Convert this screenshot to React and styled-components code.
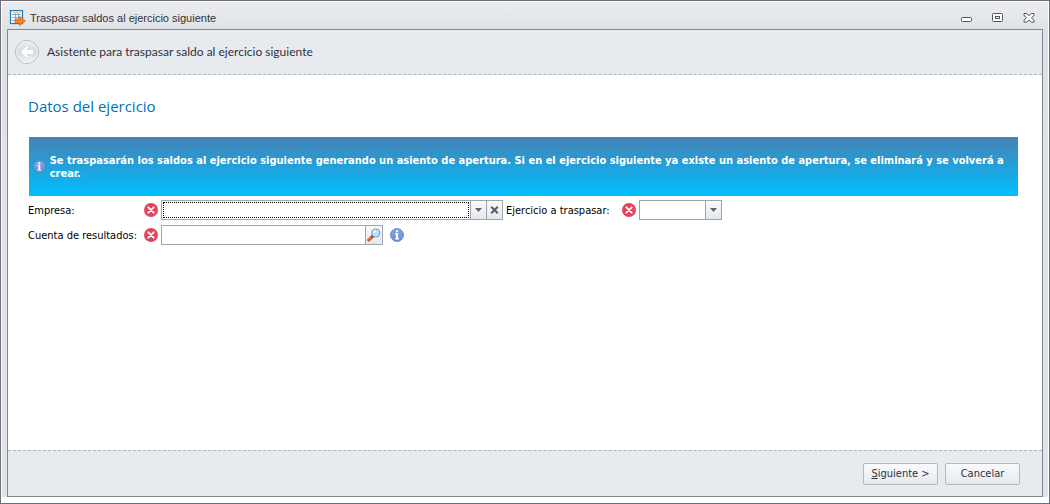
import React, { useState } from 'react';
import styled, { createGlobalStyle } from 'styled-components';

const GlobalStyle = createGlobalStyle`
  * {
    box-sizing: border-box;
  }

  body {
    margin: 0;
    background: #fff;
    color: #000;
    font-family: 'DejaVu Sans Condensed', 'DejaVu Sans', sans-serif;
    font-size: 11px;
    line-height: 13px;
  }

  button, input, select {
    font: inherit;
    color: inherit;
    margin: 0;
  }
`;

const Window = styled.div`
  min-height: 100vh;
  display: flex;
  flex-direction: column;
  border: 1px solid #6c6f78;
  padding: 1px 1px 6px;
  background: #fff;
`;

const Frame = styled.div`
  flex: 1;
  display: flex;
  flex-direction: column;
  padding: 0 5px;
  background: linear-gradient(#ebecef, #dfe2e5 28px, #e1e4e7);
`;

const TitleBar = styled.header`
  display: flex;
  align-items: center;
  height: 27px;
  padding: 5px 8px 0 2px;
`;

const WindowTitle = styled.h1`
  flex: 1;
  margin: 0 0 0 4px;
  font-family: 'Liberation Sans', Arial, sans-serif;
  font-size: 11px;
  font-weight: normal;
  line-height: 16px;
  color: #32323c;
`;

const WindowButtons = styled.div`
  display: flex;
  gap: 20px;
`;

const IconButton = styled.button`
  display: flex;
  padding: 0;
  border: 0;
  background: none;
`;

const Wizard = styled.div`
  flex: 1;
  display: flex;
  flex-direction: column;
  border: 1px solid #84868f;
  background: #fff;
`;

const WizardHeader = styled.div`
  display: flex;
  align-items: center;
  gap: 7px;
  height: 45px;
  padding: 0 6px;
  border-bottom: 1px dashed #b1b5c2;
  background: #e7eaef;
`;

const WizardTitle = styled.h2`
  margin: 0;
  font-family: Lato, sans-serif;
  font-size: 12px;
  font-weight: normal;
  line-height: 16px;
  color: #32323c;
`;

const Page = styled.main`
  flex: 1;
  padding: 20px 24px 20px 20px;
`;

const PageTitle = styled.h3`
  margin: 0 0 20px;
  font-family: 'Open Sans', sans-serif;
  font-size: 15px;
  font-weight: normal;
  line-height: 22px;
  color: #0072b5;
`;

const Banner = styled.div`
  display: flex;
  align-items: center;
  gap: 4px;
  height: 59px;
  margin: 0 0 4px 1px;
  padding: 0 4px;
  background: linear-gradient(#4682b4, #00bfff);
  color: #fff;
  font-weight: bold;

  p {
    margin: 0;
  }
`;

const Row = styled.div`
  display: flex;
  align-items: center;
  gap: 3px;
  height: 20px;
  margin-bottom: 5px;
`;

const Label = styled.label`
  width: 113px;
  white-space: nowrap;
`;

const Field = styled.div`
  display: flex;
  width: ${(props) => props.$width}px;
  height: 20px;
  border: 1px solid #a0a4b1;
  background: #fff;
`;

const Select = styled.select`
  flex: 1;
  min-width: 0;
  appearance: none;
  border: 0;
  border-radius: 0;
  padding: 0 2px;
  background: #fff;
  outline: ${(props) => (props.$active ? '1px dotted #000' : 'none')};
  outline-offset: -2px;
`;

const Input = styled.input`
  flex: 1;
  min-width: 0;
  border: 0;
  padding: 0 2px;
  outline: none;
`;

const FieldButton = styled.button`
  display: flex;
  align-items: center;
  justify-content: center;
  width: ${(props) => props.$width || 16}px;
  padding: 0;
  border: 0;
  border-left: 1px solid #a0a4b1;
  background: linear-gradient(#f8f9fb, #e4e8ed);
`;

const HelpButton = styled(IconButton)`
  margin-left: 4px;
`;

const Footer = styled.footer`
  display: flex;
  justify-content: flex-end;
  align-items: center;
  gap: 7px;
  height: 46px;
  padding: 0 22px 0 0;
  border-top: 1px dashed #b1b5c2;
  background: #e7eaef;
`;

const Button = styled.button`
  width: 75px;
  height: 22px;
  padding: 0;
  border: 1px solid #b5b8c0;
  border-radius: 2px;
  background: linear-gradient(#f9fafc, #e5e9ee);
  color: #32323c;
`;

function AppIcon() {
  return (
    <svg width="17" height="17" viewBox="0 0 17 17" aria-hidden="true">
      <rect x="1.5" y=".5" width="12" height="13" fill="#fff" stroke="#1b7db3" strokeWidth="1.3" />
      <path d="M4 2h2v1H4zM7 2h2v1H7zM10 2h2v1h-2z" fill="#f5b04c" />
      <path d="M3 4.5h9M3 7.500h9M3 10.500h5M6.500 3v9M9.500 3v6" stroke="#7aacd6" fill="none" />
      <path d="M6 9h4.500V6.300l6 4.600-6 4.700v-2.800H6z" fill="#f58220" stroke="#d9650f" strokeWidth=".7" />
    </svg>
  );
}

function BackIcon() {
  return (
    <svg width="26" height="26" viewBox="0 0 26 26" aria-hidden="true">
      <defs>
        <linearGradient id="back" x1="0" y1="0" x2="0" y2="1">
          <stop offset="0" stopColor="#eef0f3" />
          <stop offset=".5" stopColor="#d5dae1" />
          <stop offset="1" stopColor="#f4f6f8" />
        </linearGradient>
      </defs>
      <circle cx="13" cy="13" r="11.5" fill="url(#back)" stroke="#b5bac3" />
      <circle cx="13" cy="13" r="10.4" fill="none" stroke="#f3f5f7" strokeWidth="1" />
      <path
        d="M6.5 13l6-6q1-.8 1.8.2.7 1-.2 1.9l-1.3 1.5h5.400q1.600 0 1.600 1.500v1.800q0 1.500-1.600 1.500h-5.400l1.300 1.500q.9.9.2 1.900-.8 1-1.800.2z"
        fill="#fff"
        stroke="#c3c7cf"
        strokeWidth=".5"
      />
    </svg>
  );
}

function MinimizeIcon() {
  return (
    <svg width="11" height="10" viewBox="0 0 11 10" aria-hidden="true">
      <rect x=".5" y="4.5" width="10" height="4" rx="1" fill="#fff" stroke="#50535c" />
    </svg>
  );
}

function MaximizeIcon() {
  return (
    <svg width="11" height="10" viewBox="0 0 11 10" aria-hidden="true">
      <rect x=".5" y=".5" width="10" height="8" rx="1" fill="#fff" stroke="#50535c" />
      <rect x="3.5" y="3.5" width="4" height="2" fill="#fff" stroke="#50535c" />
    </svg>
  );
}

function CloseIcon() {
  return (
    <svg width="12" height="10" viewBox="0 0 12 10" aria-hidden="true">
      <path
        d="M1 .5h2.7L6 2.600 8.300.5H11v1.900L8.500 4.800 11 7.200v1.900H8.300L6 7 3.700 9.100H1V7.200l2.500-2.400L1 2.400z"
        fill="#fff"
        stroke="#50535c"
        strokeLinejoin="round"
      />
    </svg>
  );
}

function ErrorIcon() {
  return (
    <svg width="14" height="14" viewBox="0 0 14 14" role="img" aria-label="Error">
      <circle cx="7" cy="7" r="7" fill="#e5435a" />
      <path d="M4.3 4.3l5.4 5.4M9.7 4.3L4.3 9.7" stroke="#fff" strokeWidth="1.8" strokeLinecap="round" />
    </svg>
  );
}

function InfoIcon({ size }) {
  return (
    <svg width={size} height={size} viewBox="0 0 14 14" aria-hidden="true">
      <defs>
        <linearGradient id="info" x1="0" y1="0" x2="0" y2="1">
          <stop offset="0" stopColor="#86a6e2" />
          <stop offset="1" stopColor="#6d90d8" />
        </linearGradient>
      </defs>
      <circle cx="7" cy="7" r="6.5" fill="url(#info)" stroke="#5b7cc4" strokeWidth=".8" />
      <path d="M6 2.2h2v2H6zM5 5.200h3v5h1v1.300H5v-1.300h1V6.500H5z" fill="#fff" />
    </svg>
  );
}

function ArrowIcon() {
  return (
    <svg width="7" height="4" viewBox="0 0 7 4" aria-hidden="true">
      <path d="M0 0h7L3.5 4z" fill="#60636d" />
    </svg>
  );
}

function ClearIcon() {
  return (
    <svg width="9" height="8" viewBox="0 0 9 8" aria-hidden="true">
      <path d="M1.2.8l6.6 6.4M7.8.8L1.2 7.2" stroke="#565963" strokeWidth="2" />
    </svg>
  );
}

function SearchIcon() {
  return (
    <svg width="14" height="14" viewBox="0 0 14 14" aria-hidden="true">
      <path d="M1.9 11.900l3-3" stroke="#c9591b" strokeWidth="3.2" strokeLinecap="round" />
      <path d="M1.7 11.200l2.800-2.800" stroke="#f9b36a" strokeWidth="1" strokeLinecap="round" />
      <path d="M4.7 9.300l1.500-1.500" stroke="#4d5670" strokeWidth="3" />
      <circle cx="8.800" cy="5" r="4" fill="#b9e3fa" stroke="#8792ab" strokeWidth="1.1" />
      <path d="M6.7 5a2.2 2.2 0 0 1 2.3-2.3" stroke="#fff" strokeWidth="1.3" fill="none" />
    </svg>
  );
}

function App() {
  const [empresa, setEmpresa] = useState('');
  const [ejercicio, setEjercicio] = useState('');
  const [cuenta, setCuenta] = useState('');

  return (
    <>
      <GlobalStyle />
      <Window>
        <Frame>
          <TitleBar>
            <AppIcon />
            <WindowTitle>Traspasar saldos al ejercicio siguiente</WindowTitle>
            <WindowButtons>
              <IconButton aria-label="Minimizar"><MinimizeIcon /></IconButton>
              <IconButton aria-label="Maximizar"><MaximizeIcon /></IconButton>
              <IconButton aria-label="Cerrar"><CloseIcon /></IconButton>
            </WindowButtons>
          </TitleBar>

          <Wizard>
            <WizardHeader>
              <IconButton aria-label="Atrás"><BackIcon /></IconButton>
              <WizardTitle>Asistente para traspasar saldo al ejercicio siguiente</WizardTitle>
            </WizardHeader>

            <Page>
              <PageTitle>Datos del ejercicio</PageTitle>

              <Banner>
                <InfoIcon size={13} />
                <p>
                  Se traspasarán los saldos al ejercicio siguiente generando un asiento de apertura. Si en el
                  ejercicio siguiente ya existe un asiento de apertura, se eliminará y se volverá a crear.
                </p>
              </Banner>

              <Row>
                <Label htmlFor="empresa">Empresa:</Label>
                <ErrorIcon />
                <Field $width={342}>
                  <Select
                    id="empresa"
                    $active
                    value={empresa}
                    onChange={(e) => setEmpresa(e.target.value)}
                  >
                    <option value="" />
                  </Select>
                  <FieldButton aria-label="Desplegar empresas"><ArrowIcon /></FieldButton>
                  <FieldButton aria-label="Borrar empresa" onClick={() => setEmpresa('')}>
                    <ClearIcon />
                  </FieldButton>
                </Field>
                <Label htmlFor="ejercicio">Ejercicio a traspasar:</Label>
                <ErrorIcon />
                <Field $width={83}>
                  <Select
                    id="ejercicio"
                    value={ejercicio}
                    onChange={(e) => setEjercicio(e.target.value)}
                  >
                    <option value="" />
                  </Select>
                  <FieldButton aria-label="Desplegar ejercicios"><ArrowIcon /></FieldButton>
                </Field>
              </Row>

              <Row>
                <Label htmlFor="cuenta">Cuenta de resultados:</Label>
                <ErrorIcon />
                <Field $width={222}>
                  <Input id="cuenta" value={cuenta} onChange={(e) => setCuenta(e.target.value)} />
                  <FieldButton aria-label="Buscar cuenta" $width={17}><SearchIcon /></FieldButton>
                </Field>
                <HelpButton aria-label="Información"><InfoIcon size={14} /></HelpButton>
              </Row>
            </Page>

            <Footer>
              <Button><u>S</u>iguiente &gt;</Button>
              <Button>Cancelar</Button>
            </Footer>
          </Wizard>
        </Frame>
      </Window>
    </>
  );
}

export default App;
